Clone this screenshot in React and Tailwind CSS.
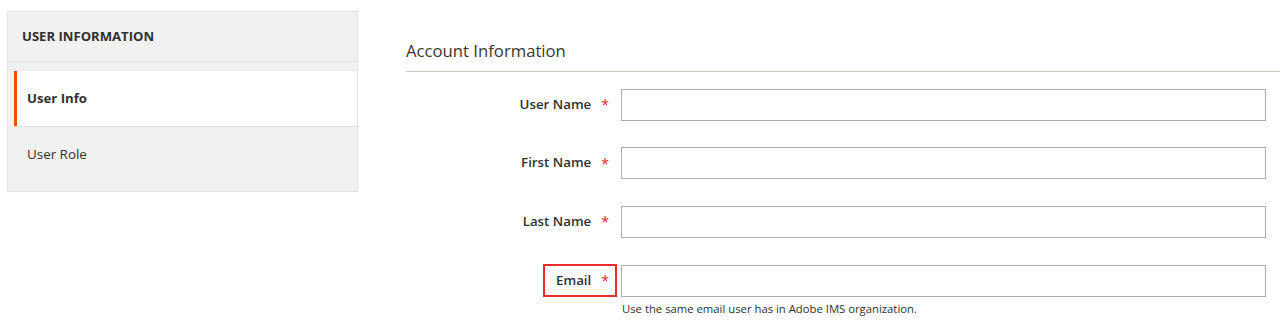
import React from 'react';

// Sidebar tabs + account form, Magento admin style
const fields = [
  { id: 'username', label: 'User Name' },
  { id: 'firstname', label: 'First Name' },
  { id: 'lastname', label: 'Last Name' },
  { id: 'email', label: 'Email', highlight: true, note: 'Use the same email user has in Adobe IMS organization.' },
];

function Sidebar() {
  return (
    <aside className="ml-[7px] mt-[11px] w-[351px] shrink-0 self-start border border-[#e3e3e3] bg-[#f1f1f1] pb-[10px]">
      <div className="flex h-[50px] items-center border-b border-[#e3e3e3] pl-[14px] text-[13.1px] font-bold uppercase text-[#303030]">
        User Information
      </div>
      <div className="mt-[8px] ml-[6px] border-t border-[#e8e8e8]">
        <div className="flex h-[55px] items-center border-l-[3px] border-[#eb5202] bg-white pl-[10px] text-[13.2px] font-bold text-[#303030]">
          User Info
        </div>
        <div className="flex h-[55px] items-center border-t border-[#e3e3e3] pl-[13px] text-[13.4px] text-[#303030]">
          User Role
        </div>
      </div>
    </aside>
  );
}

function Field({ field }) {
  return (
    <div>
      <div className="flex items-center">
        <div className="flex w-[211px] justify-end">
          <label
            htmlFor={field.id}
            className={
              'flex h-[33px] items-center border-2 pl-[11px] pr-[6px] text-[13.3px] font-semibold text-[#303030] ' +
              (field.highlight ? 'border-[#eb2b2b]' : 'border-transparent')
            }
          >
            {field.label}
            <span className="ml-[10px] text-[14px] font-normal text-[#e22626]">*</span>
          </label>
        </div>
        <input
          id={field.id}
          type="text"
          className="ml-[4px] mr-[14px] h-[32px] flex-1 border border-[#adadad] bg-white px-2 text-[14px] outline-none"
        />
      </div>
      {field.note && (
        <p className="ml-[216px] mt-[4px] text-[11.3px] leading-[16px] text-[#303030]">{field.note}</p>
      )}
    </div>
  );
}

export default function App() {
  return (
    <div className="flex h-[327px] overflow-hidden bg-white font-['Open_Sans',sans-serif]">
      <Sidebar />
      <main className="ml-[48px] flex-1 pt-[38px]">
        <h2 className="border-b border-[#ccc7c1] pb-[7px] text-[16.7px] leading-[26px] text-[#41362f]">
          Account Information
        </h2>
        <div className="mt-[16px] flex flex-col gap-[25.7px]">
          {fields.map((f) => (
            <Field key={f.id} field={f} />
          ))}
        </div>
      </main>
    </div>
  );
}
